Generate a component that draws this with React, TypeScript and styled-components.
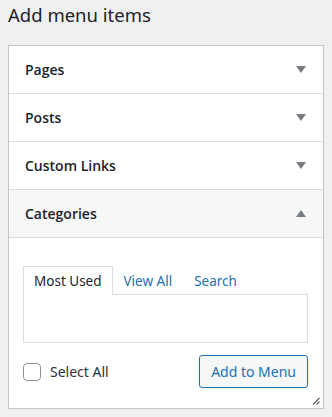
import { useState } from "react";
import styled, { createGlobalStyle } from "styled-components";

const GlobalStyle = createGlobalStyle`
  html, body {
    margin: 0;
    padding: 0;
    background: #f0f0f1;
  }
  body {
    font-family: "Noto Sans", "Open Sans", "DejaVu Sans", sans-serif;
    color: #1d2327;
  }
`;

const sections = ["Pages", "Posts", "Custom Links"];
const tabs = ["Most Used", "View All", "Search"];

const App = () => {
  const [activeTab, setActiveTab] = useState("Most Used");
  const [selectAll, setSelectAll] = useState(false);

  return (
    <Page>
      <GlobalStyle />
      <Heading>Add menu items</Heading>
      <Panel>
        {sections.map((name) => (
          <Section key={name}>
            <SectionTitle>{name}</SectionTitle>
            <Arrow />
          </Section>
        ))}
        <Section $open>
          <SectionTitle>Categories</SectionTitle>
          <Arrow $up />
        </Section>
        <Content>
          <TabList>
            {tabs.map((tab) => (
              <Tab
                key={tab}
                $active={tab === activeTab}
                onClick={() => setActiveTab(tab)}
              >
                {tab}
              </Tab>
            ))}
          </TabList>
          <TabPanel />
          <Actions>
            <CheckLabel>
              <Checkbox
                type="checkbox"
                checked={selectAll}
                onChange={(e) => setSelectAll(e.target.checked)}
              />
              Select All
            </CheckLabel>
            <Button>Add to Menu</Button>
          </Actions>
        </Content>
        <Grip viewBox="0 0 8 8" aria-hidden>
          <path d="M7.5 1 L1 7.5 M7.5 4.5 L4.5 7.5" />
        </Grip>
      </Panel>
    </Page>
  );
};

const Page = styled.div`
  padding: 0 8px;
`;

const Heading = styled.h2`
  margin: 0 0 16px;
  padding-top: 1px;
  font-size: 18.5px;
  font-weight: 400;
  line-height: 28px;
  color: #1d2327;
`;

const Panel = styled.div`
  position: relative;
  background: #fff;
  border: 1px solid #c3c4c7;
  box-shadow: 0 1px 1px rgba(0, 0, 0, 0.04);
  overflow: hidden;
  height: 362px;
`;

const Grip = styled.svg`
  position: absolute;
  right: 3px;
  bottom: 3px;
  width: 8px;
  height: 8px;
  stroke: #5a5d62;
  stroke-width: 1.1;
  fill: none;
`;

const Section = styled.div<{ $open?: boolean }>`
  display: flex;
  align-items: center;
  justify-content: space-between;
  height: 47px;
  padding: 0 17px 0 16px;
  border-bottom: 1px solid #dcdcde;
  background: ${({ $open }) => ($open ? "#f6f7f7" : "#fff")};
  cursor: pointer;
`;

const SectionTitle = styled.h3`
  margin: 0;
  font-family: "Open Sans", "Noto Sans", sans-serif;
  font-size: 14px;
  font-weight: 600;
  color: #1d2327;
`;

const Arrow = styled.span<{ $up?: boolean }>`
  width: 0;
  height: 0;
  border-left: 5px solid transparent;
  border-right: 5px solid transparent;
  ${({ $up }) =>
    $up ? "border-bottom: 7px solid #787c82;" : "border-top: 7px solid #787c82;"}
`;

const Content = styled.div`
  padding: 28px 15px 0 14px;
`;

const TabList = styled.div`
  display: flex;
  height: 28px;
`;

const Tab = styled.button<{ $active?: boolean }>`
  font: inherit;
  font-size: 13.5px;
  padding: 0 10px;
  height: ${({ $active }) => ($active ? "29px" : "28px")};
  background: ${({ $active }) => ($active ? "#fff" : "transparent")};
  border: 1px solid ${({ $active }) => ($active ? "#dcdcde" : "transparent")};
  border-bottom: none;
  color: ${({ $active }) => ($active ? "#1d2327" : "#2271b1")};
  position: relative;
  z-index: ${({ $active }) => ($active ? 1 : 0)};
  cursor: pointer;
`;

const TabPanel = styled.div`
  height: 47px;
  border: 1px solid #dcdcde;
  background: #fff;
`;

const Actions = styled.div`
  display: flex;
  align-items: center;
  justify-content: space-between;
  margin-top: 12px;
`;

const CheckLabel = styled.label`
  display: flex;
  align-items: center;
  gap: 9px;
  font-size: 14px;
  color: #2c3338;
`;

const Checkbox = styled.input`
  appearance: none;
  margin: 0;
  width: 18px;
  height: 18px;
  border: 1px solid #8c8f94;
  border-radius: 4px;
  background: #fff;
  &:checked {
    background: #2271b1;
  }
`;

const Button = styled.button`
  font: inherit;
  font-size: 14px;
  height: 33px;
  padding: 0 11px;
  color: #2271b1;
  background: #f6f7f7;
  border: 1px solid #2271b1;
  border-radius: 3px;
  cursor: pointer;
`;

export default App;
